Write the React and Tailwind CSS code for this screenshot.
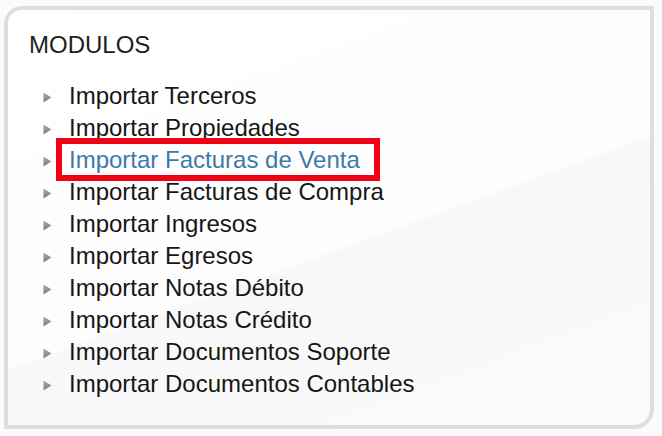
import React from "react";

const modulos = [
    "Importar Terceros",
    "Importar Propiedades",
    "Importar Facturas de Venta",
    "Importar Facturas de Compra",
    "Importar Ingresos",
    "Importar Egresos",
    "Importar Notas Débito",
    "Importar Notas Crédito",
    "Importar Documentos Soporte",
    "Importar Documentos Contables",
];

const Bullet = () => (
    <svg width="9" height="11" viewBox="0 0 9 11" className="mt-[12px] shrink-0">
        <defs>
            <linearGradient id="bullet" x1="0" y1="0" x2="0" y2="1">
                <stop offset="0" stopColor="#a8a8a8" />
                <stop offset="1" stopColor="#7e7e7e" />
            </linearGradient>
        </defs>
        <path d="M0.5 0.5 L8.5 5.5 L0.5 10.5 Z" fill="url(#bullet)" />
    </svg>
);

const App = () => {
    const selected = "Importar Facturas de Venta";

    return (
        <div className="w-[662px] h-[436px] bg-[#fbfbfb] pt-[6px] pl-[4px] font-['Liberation_Sans',Arial,sans-serif]">
            <div className="w-[650px] h-[423px] border-4 border-[#dedede] rounded-tl-[18px] rounded-br-[20px] bg-[linear-gradient(160deg,#ffffff_0%,#fdfdfd_55%,#f8f8f8_56%,#fafafa_100%)] pt-[21px] pl-[21px]">
                <h2 className="text-[24px] leading-[28px] text-[#1e1e1e]">MODULOS</h2>
                <ul className="mt-[21px] pl-[14px]">
                    {modulos.map((modulo) => (
                        <li key={modulo} className="flex h-[32px]">
                            <Bullet />
                            <span
                                className={
                                    modulo === selected
                                        ? "relative ml-[17px] text-[24px] leading-[32px] text-[#3f79aa]"
                                        : "ml-[17px] text-[24px] leading-[32px] text-[#161616]"
                                }
                            >
                                {modulo}
                                {modulo === selected && (
                                    <span className="absolute left-[-13px] top-[-6px] w-[324px] h-[43px] border-[6px] border-[#f20014]"></span>
                                )}
                            </span>
                        </li>
                    ))}
                </ul>
            </div>
        </div>
    );
};

export default App;
